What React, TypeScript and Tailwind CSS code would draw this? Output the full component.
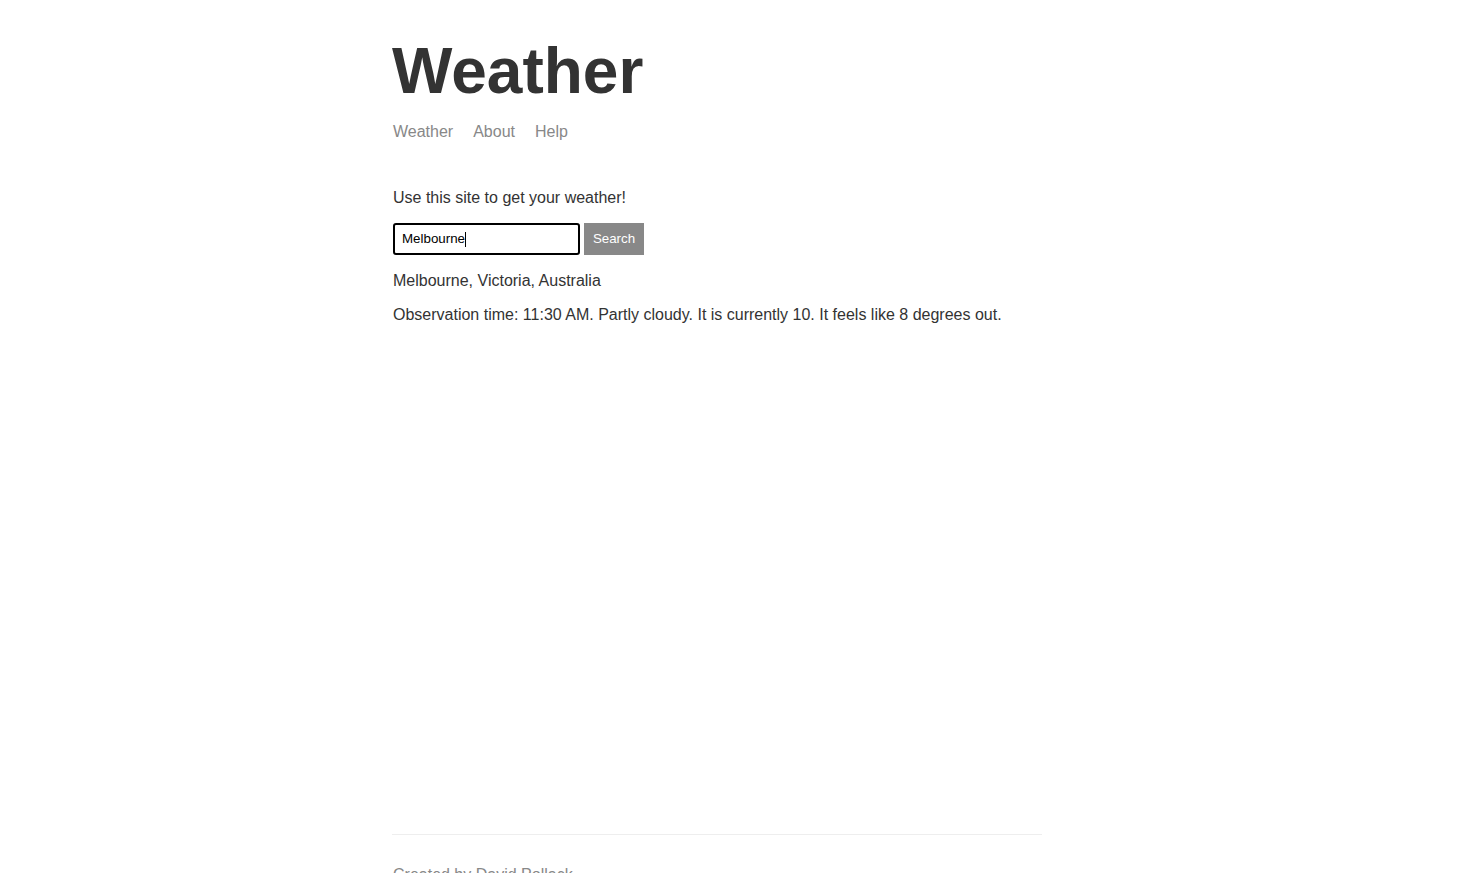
import React from "react";

export default function App() {
  return (
    <div className="bg-white text-[#333333]" style={{ fontFamily: '"Liberation Sans", Arial, sans-serif' }}>
      <div className="ml-[393px] w-[649px] flex flex-col min-h-[900px]">
        <div className="flex-grow pt-[34px]">
          <header>
            <h1 className="-ml-px text-[64px] font-bold leading-[74px]">Weather</h1>
            <nav className="mt-[15px] flex text-[16px] leading-[18px] text-[#888888]">
              <a className="mr-[20px]">Weather</a>
              <a className="mr-[20px]">About</a>
              <a>Help</a>
            </nav>
          </header>
          <main className="mt-[48px]">
            <p className="text-[16px] leading-[18px]">Use this site to get your weather!</p>
            <form className="mt-[16px] flex items-center gap-[4px]" onSubmit={(e) => e.preventDefault()}>
              <div className="w-[187px] h-[32px] border-2 border-black rounded-[3px] flex items-center pl-[7px] text-[13.33px] text-black">
                <span>Melbourne</span>
                <span className="inline-block w-px h-[15px] bg-black"></span>
              </div>
              <button type="button" className="w-[60px] h-[32px] bg-[#888888] text-white text-[13.33px] flex items-center justify-center">
                Search
              </button>
            </form>
            <p className="mt-[17px] text-[16px] leading-[18px]">Melbourne, Victoria, Australia</p>
            <p className="mt-[16px] text-[16px] leading-[18px]">
              Observation time: 11:30 AM. Partly cloudy. It is currently 10. It feels like 8 degrees out.
            </p>
          </main>
        </div>
        <footer className="-ml-px border-t border-[#eeeeee] pt-[31px] pb-[16px] text-[16px] leading-[18px] text-[#888888]">
          <p className="ml-px">Created by David Pollack</p>
        </footer>
      </div>
    </div>
  );
}
